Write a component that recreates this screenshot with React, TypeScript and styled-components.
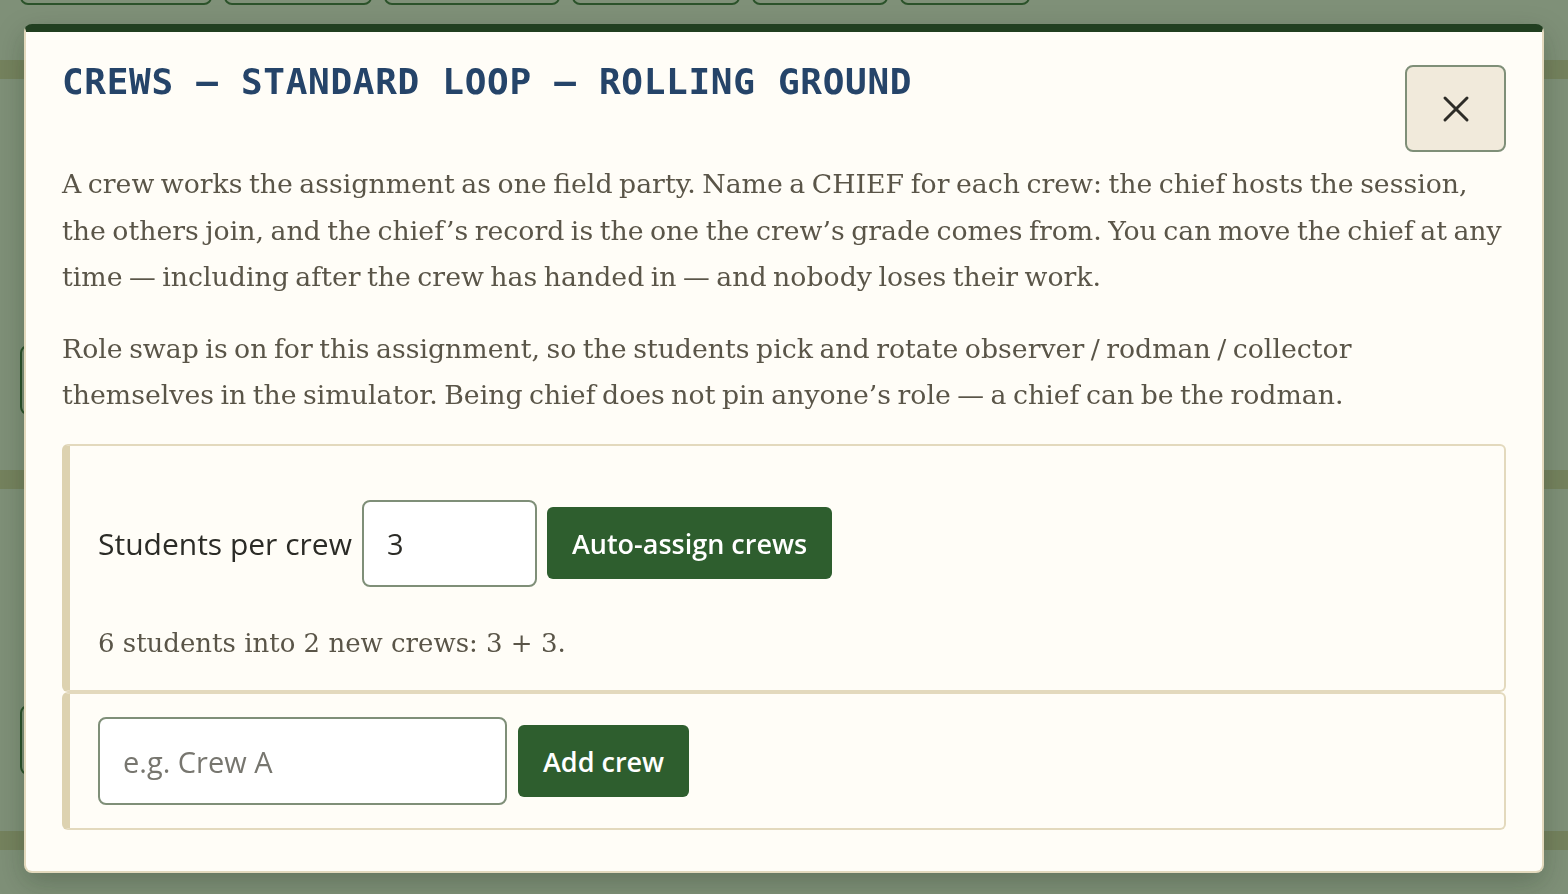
import React from "react";
import styled, { createGlobalStyle } from "styled-components";

const GlobalStyle = createGlobalStyle`
  html, body {
    margin: 0;
    padding: 0;
    height: 100%;
  }
  body {
    background: #f5f1e6;
    overflow: hidden;
    font-family: "DejaVu Serif", serif;
  }
`;

const serif = `"DejaVu Serif", "Liberation Serif", serif`;
const sans = `"Open Sans", "Noto Sans", "DejaVu Sans", sans-serif`;
const mono = `"DejaVu Sans Mono", "Liberation Mono", monospace`;

/* ---------- page underneath the dialog ---------- */

const tabWidths = [192, 148, 176, 168, 136, 130];

const Page = styled.div`
  margin-top: -40px;
  display: flex;
  flex-direction: column;
`;

const TabRow = styled.nav`
  display: flex;
  gap: 12px;
  padding-left: 20px;
`;

const Tab = styled.div<{ w: number }>`
  width: ${props => props.w}px;
  height: 45px;
  box-sizing: border-box;
  border: 2px solid #2e5e2e;
  border-radius: 8px;
  background: #f5f1e6;
`;

const Band = styled.div<{ top: number }>`
  margin-top: ${props => props.top}px;
  height: 19px;
  background: #ddcfa8;
`;

const Block = styled.section<{ h: number; pad: number }>`
  height: ${props => props.h}px;
  box-sizing: border-box;
  padding: ${props => props.pad}px 20px 0;
`;

const GhostButton = styled.div`
  width: 220px;
  height: 70px;
  box-sizing: border-box;
  border: 2px solid #2e5e2e;
  border-radius: 8px;
`;

/* ---------- dialog ---------- */

const Overlay = styled.div`
  position: fixed;
  inset: 0;
  background: rgba(42, 74, 40, 0.58);
  display: flex;
  justify-content: center;
  align-items: flex-start;
  padding-top: 24px;
`;

const Modal = styled.div`
  width: 1520px;
  box-sizing: border-box;
  background: #fffdf7;
  border: 2px solid #e3d9bd;
  border-top: 8px solid #213f20;
  border-radius: 8px;
  padding: 33px 36px 41px;
  box-shadow: 0 10px 28px rgba(20, 35, 18, 0.25);
`;

const Header = styled.header`
  display: flex;
  justify-content: space-between;
  align-items: flex-start;
`;

const Title = styled.h2`
  margin: -4px 0 0;
  font-family: ${mono};
  font-weight: 700;
  font-size: 36px;
  letter-spacing: 0.7px;
  color: #254469;
`;

const CloseButton = styled.button`
  width: 101px;
  height: 87px;
  box-sizing: border-box;
  border: 2px solid #7f8f78;
  border-radius: 8px;
  background: #f1eadb;
  display: flex;
  align-items: center;
  justify-content: center;
  padding: 0;
  cursor: pointer;
`;

const Lede = styled.p`
  margin: 9px 0 25px;
  font-family: ${serif};
  font-size: 26.75px;
  word-spacing: -2px;
  line-height: 46.5px;
  color: #5a5548;

  & + & {
    margin-top: 0;
  }
`;

const Panel = styled.div<{ pad: string }>`
  border: 2px solid #e3d9bd;
  border-left: 8px solid #ddd2b0;
  border-radius: 6px;
  padding: ${props => props.pad};
`;

const Row = styled.div<{ gap: number }>`
  display: flex;
  align-items: center;
  gap: ${props => props.gap}px;
`;

const Label = styled.label`
  font-family: ${sans};
  font-size: 30px;
  color: #2b2b26;
`;

const Field = styled.input<{ w: number; h: number }>`
  width: ${props => props.w}px;
  height: ${props => props.h}px;
  box-sizing: border-box;
  border: 2px solid #7f8f78;
  border-radius: 8px;
  background: #ffffff;
  padding: 0 23px;
  font-family: ${sans};
  font-size: 29px;
  color: #2b2b26;
  outline: none;

  &::placeholder {
    color: #77766f;
  }
`;

const PrimaryButton = styled.button`
  height: 72px;
  padding: 0 25px;
  border: none;
  border-radius: 6px;
  background: #2e5e2e;
  color: #ffffff;
  font-family: ${sans};
  font-weight: 600;
  font-size: 27px;
  cursor: pointer;
`;

const Hint = styled.p`
  margin: 33px 0 0;
  font-family: ${serif};
  font-size: 26px;
  line-height: 46.5px;
  color: #5a5548;
`;

const CloseIcon = () => (
    <svg width="28" height="28" viewBox="0 0 28 28" fill="none">
        <path d="M3 3 L25 25 M25 3 L3 25" stroke="#2d2c27" strokeWidth="3" strokeLinecap="round" />
    </svg>
);

export default function App() {
    return (
        <>
            <GlobalStyle />
            <Page aria-hidden="true">
                <TabRow>
                    {tabWidths.map((w, i) => (
                        <Tab key={i} w={w} />
                    ))}
                </TabRow>
                <Band top={55} />
                <Block h={391} pad={266}>
                    <GhostButton />
                </Block>
                <Band top={0} />
                <Block h={342} pad={216}>
                    <GhostButton />
                </Block>
                <Band top={0} />
            </Page>

            <Overlay>
                <Modal role="dialog" aria-modal="true">
                    <Header>
                        <Title>CREWS — STANDARD LOOP — ROLLING GROUND</Title>
                        <CloseButton aria-label="Close">
                            <CloseIcon />
                        </CloseButton>
                    </Header>

                    <Lede>
                        A crew works the assignment as one field party. Name a CHIEF for each crew: the chief hosts
                        the session, the others join, and the chief’s record is the one the crew’s grade comes from.
                        You can move the chief at any time — including after the crew has handed in — and nobody
                        loses their work.
                    </Lede>
                    <Lede>
                        Role swap is on for this assignment, so the students pick and rotate observer / rodman /
                        collector themselves in the simulator. Being chief does not pin anyone’s role — a chief can
                        be the rodman.
                    </Lede>

                    <Panel pad="54px 36px 24px 28px">
                        <Row gap={10}>
                            <Label htmlFor="per-crew">Students per crew</Label>
                            <Field id="per-crew" w={175} h={87} defaultValue="3" />
                            <PrimaryButton>Auto-assign crews</PrimaryButton>
                        </Row>
                        <Hint>6 students into 2 new crews: 3 + 3.</Hint>
                    </Panel>
                    <Panel pad="23px 36px 23px 28px">
                        <Row gap={11}>
                            <Field w={409} h={88} placeholder="e.g. Crew A" />
                            <PrimaryButton>Add crew</PrimaryButton>
                        </Row>
                    </Panel>
                </Modal>
            </Overlay>
        </>
    );
}
